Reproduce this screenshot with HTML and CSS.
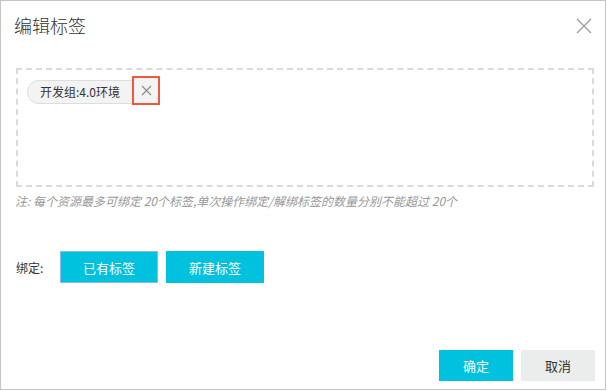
FILE: index.html
```html
<!DOCTYPE html>
<html>
<head>
    <meta charset="utf-8">
    <title>编辑标签</title>
    <link rel="stylesheet" href="styles.css">
</head>
<body>
    <div class="dialog">
        <div class="dialog-header">
            <span class="dialog-title">编辑标签</span>
            <span class="close">
                <svg width="16" height="16" viewBox="0 0 16 16"><path d="M1 1L15 15M15 1L1 15" stroke="#999" stroke-width="1.2" fill="none"/></svg>
            </span>
        </div>
        <div class="dialog-body">
            <div class="tag-box">
                <span class="tag">
                    <span class="tag-text">开发组:4.0环境</span>
                    <span class="tag-close">
                        <svg width="11" height="11" viewBox="0 0 11 11"><path d="M1 1L10 10M10 1L1 10" stroke="#888" stroke-width="1.1" fill="none"/></svg>
                    </span>
                </span>
            </div>
            <p class="note">注: 每个资源最多可绑定 20个标签,单次操作绑定/解绑标签的数量分别不能超过 20个</p>
            <div class="bind-row">
                <span class="bind-label">绑定:</span>
                <button class="btn btn-primary btn-active">已有标签</button>
                <button class="btn btn-primary">新建标签</button>
            </div>
        </div>
        <div class="dialog-footer">
            <button class="btn btn-primary btn-small">确定</button>
            <button class="btn btn-normal btn-small">取消</button>
        </div>
    </div>
</body>
</html>
```

FILE: styles.css
```css
body {
    margin: 0;
    font-family: "Noto Sans CJK SC", "Liberation Sans", sans-serif;
    background: #fff;
}
.dialog {
    width: 606px;
    height: 390px;
    box-sizing: border-box;
    border: 1px solid #c4c4c4;
    display: flex;
    flex-direction: column;
}
.dialog-header {
    display: flex;
    justify-content: space-between;
    align-items: center;
    padding: 12px 13px 0 13px;
    height: 24px;
}
.dialog-title {
    font-size: 18px;
    font-weight: 300;
    color: #333;
    line-height: 24px;
}
.close {
    display: flex;
    margin-top: 2px;
}
.dialog-body {
    padding: 31px 11px 0 15px;
    flex: 1;
}
.tag-box {
    height: 119px;
    box-sizing: border-box;
    border: 2px dashed #dadada;
    padding: 6px 9px;
}
.tag {
    display: inline-flex;
    align-items: flex-start;
    height: 24px;
    margin-top: 4px;
    box-sizing: border-box;
    border: 1px solid #ddd;
    border-radius: 13px;
    background: #f3f3f3;
}
.tag-text {
    font-size: 12px;
    color: #333;
    padding: 0 12px 0 12px;
    line-height: 22px;
}
.tag-close {
    display: flex;
    align-items: center;
    justify-content: center;
    box-sizing: border-box;
    width: 28px;
    height: 29px;
    margin: -5px -3px 0 0;
    border: 2px solid #f05a3c;
    background: #f3f3f3;
}
.note {
    margin: 5px 0 0 -1px;
    font-size: 12px;
    font-style: italic;
    color: #999;
    line-height: 18px;
}
.bind-row {
    display: flex;
    align-items: center;
    margin-top: 41px;
}
.bind-label {
    font-size: 12px;
    color: #333;
    width: 44px;
}
.btn {
    font-family: inherit;
    font-size: 13px;
    border: none;
    cursor: pointer;
    height: 32px;
    width: 98px;
    padding: 0;
    margin-right: 8px;
}
.btn-primary {
    background: #00c1de;
    color: #fff;
}
.btn-active {
    box-shadow: inset 0 0 0 1px #8ab8f0;
}
.btn-normal {
    background: #ebecec;
    color: #333;
}
.dialog-footer {
    display: flex;
    justify-content: flex-end;
    padding: 0 2px 8px 0;
}
.btn-small {
    width: 74px;
    height: 31px;
}
```
